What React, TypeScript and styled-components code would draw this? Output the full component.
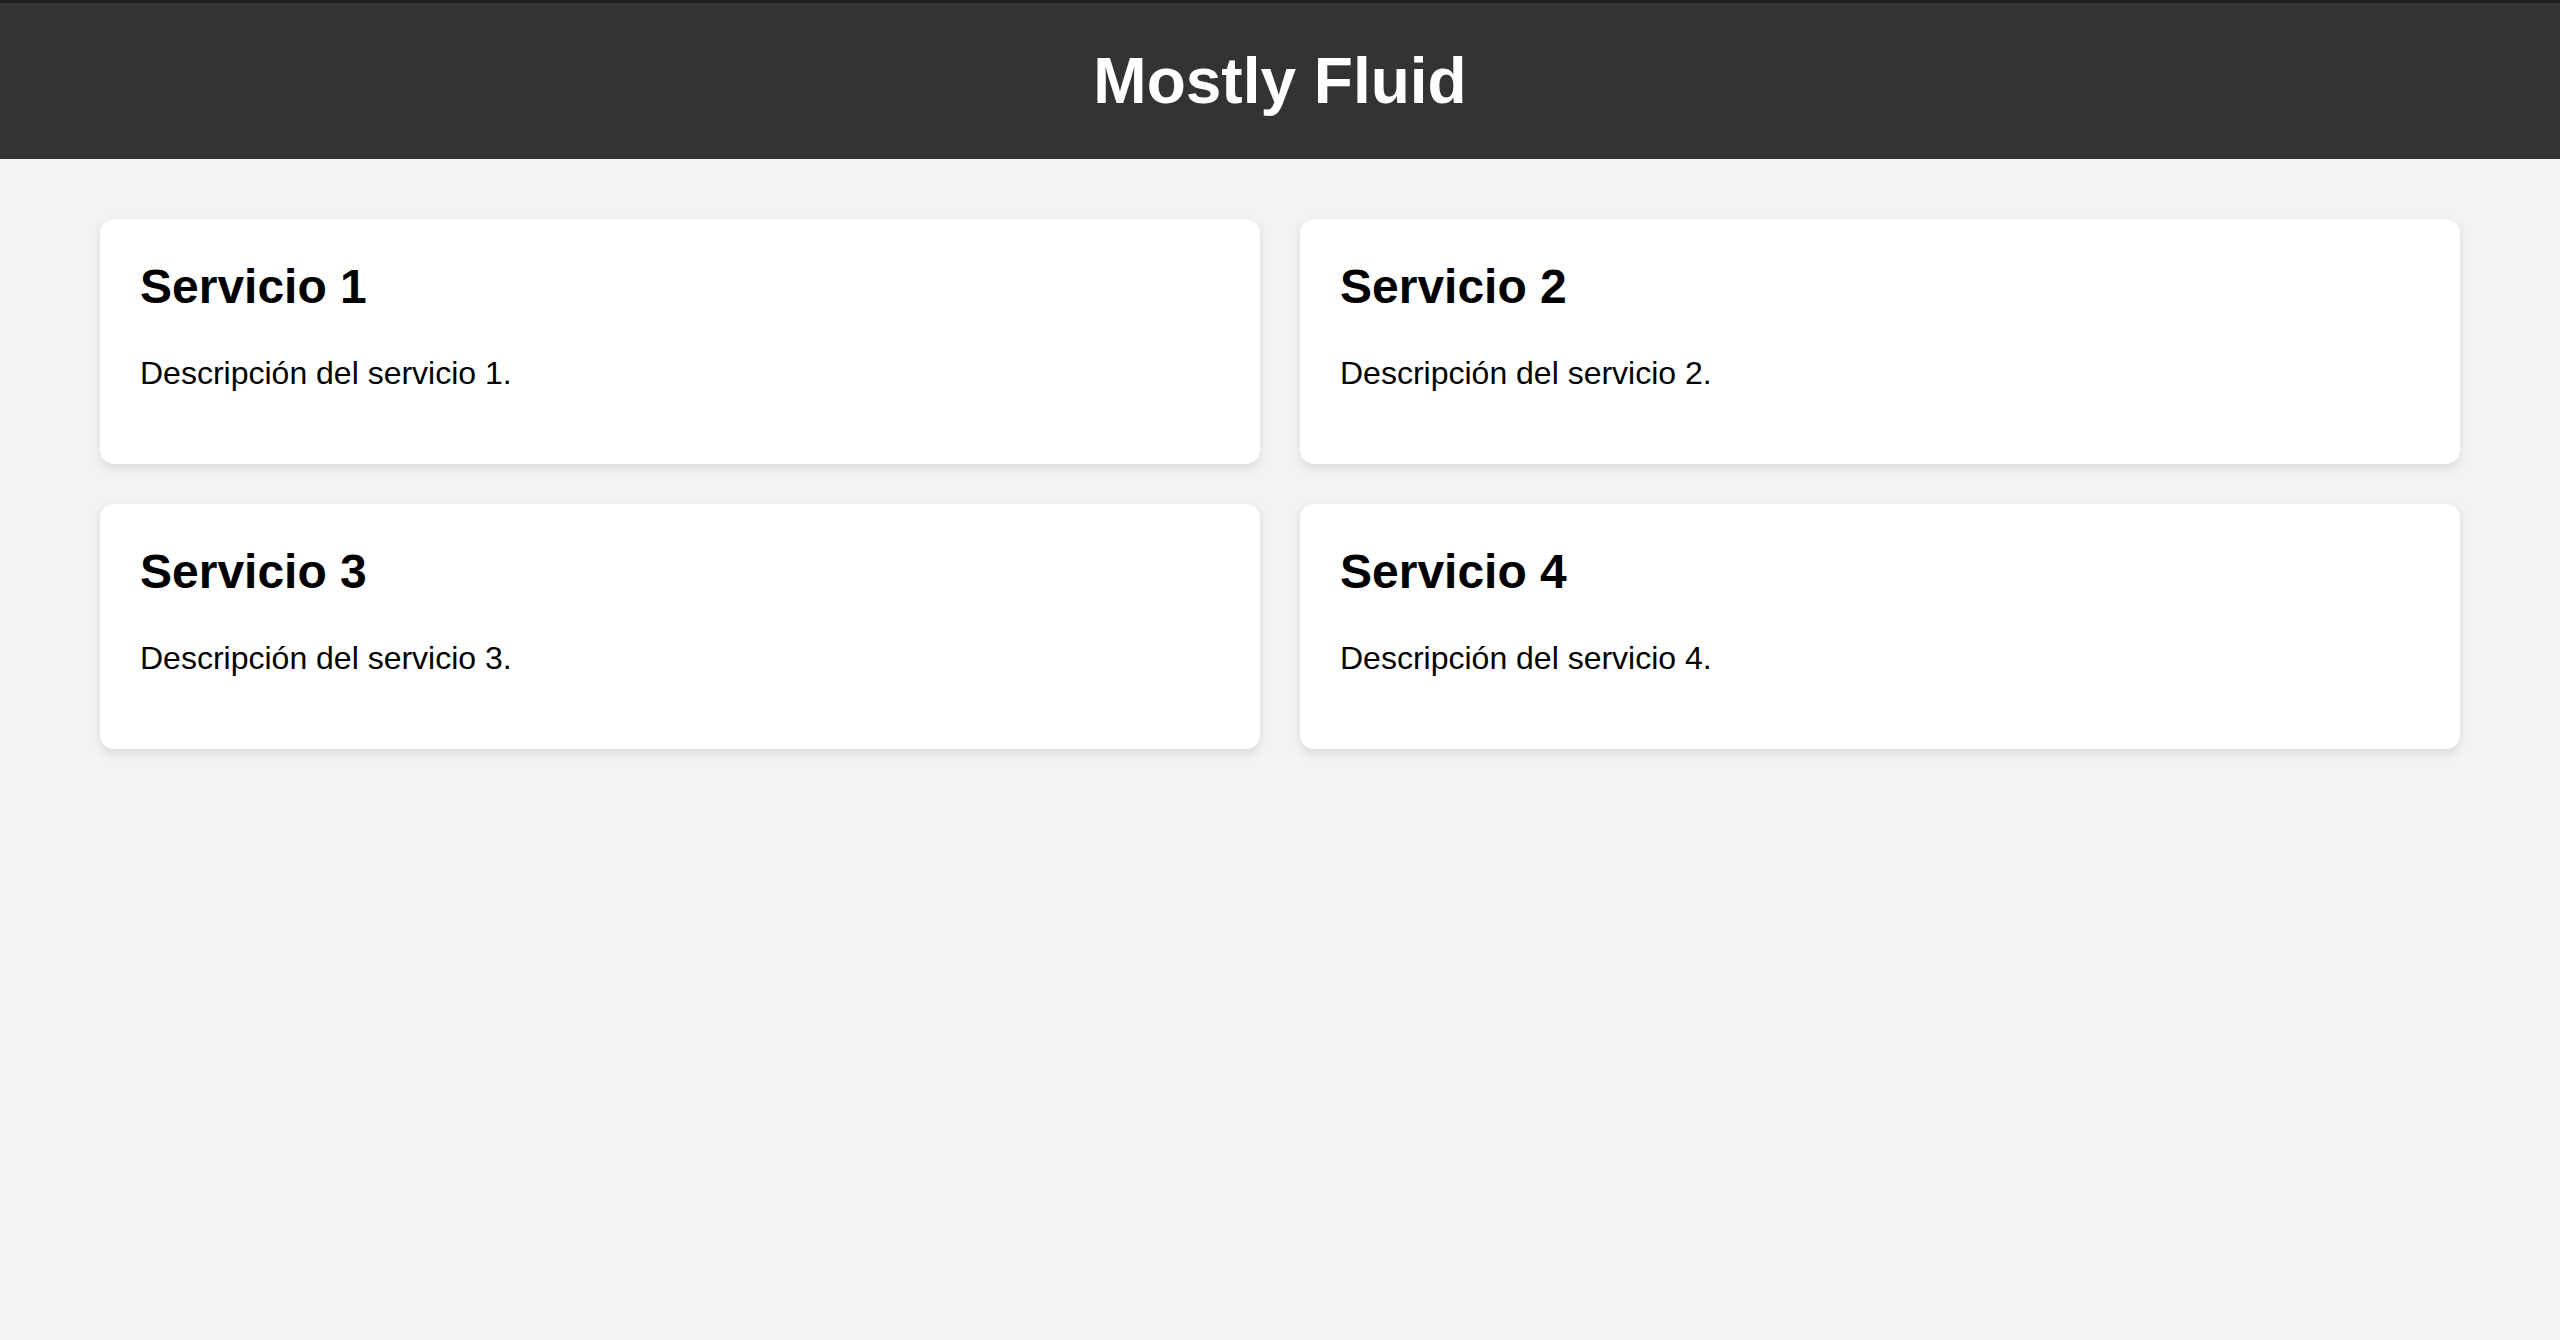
import styled, { createGlobalStyle } from "styled-components";

const GlobalStyle = createGlobalStyle`
  html, body {
    margin: 0;
    padding: 0;
  }

  body {
    min-height: 100vh;
    background-color: #f3f3f3;
    font-family: "Liberation Sans", Arial, sans-serif;
    font-size: 32px;
    color: #000;
  }
`;

const Page = styled.div`
  display: flex;
  flex-direction: column;
  min-height: 100vh;
`;

const Header = styled.header`
  background-color: #333;
  border-top: 3px solid #1f1f24;
  padding: 41px 0 41px;
  text-align: center;
`;

const Title = styled.h1`
  margin: 0;
  font-size: 64px;
  font-weight: bold;
  color: #fff;
`;

const Grid = styled.main`
  display: grid;
  grid-template-columns: repeat(2, 1fr);
  gap: 40px;
  padding: 60px 100px;
`;

const Card = styled.section`
  background-color: #fff;
  border-radius: 14px;
  box-shadow: 0 4px 12px rgba(0, 0, 0, 0.11);
  padding: 40px 40px 40px;
`;

const CardTitle = styled.h2`
  margin: 0 0 41px;
  font-size: 48px;
  font-weight: bold;
`;

const CardText = styled.p`
  margin: 0 0 32px;
  font-size: 32px;
`;

const services = [1, 2, 3, 4];

export default function App() {
  return (
    <>
      <GlobalStyle />
      <Page>
        <Header>
          <Title>Mostly Fluid</Title>
        </Header>

        <Grid>
          {services.map((n) => (
            <Card key={n}>
              <CardTitle>Servicio {n}</CardTitle>
              <CardText>Descripción del servicio {n}.</CardText>
            </Card>
          ))}
        </Grid>
      </Page>
    </>
  );
}
